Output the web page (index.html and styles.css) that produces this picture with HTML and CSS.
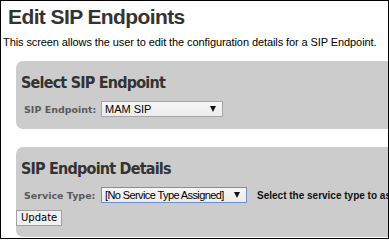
FILE: index.html
```html
<!DOCTYPE html>
<html lang="en">
<head>
<meta charset="UTF-8">
<title>Edit SIP Endpoints</title>
<link rel="stylesheet" href="styles.css">
</head>
<body>

<div id="frame">
  <h1 class="page-title">Edit SIP Endpoints</h1>
  <p class="intro">This screen allows the user to edit the configuration details for a SIP Endpoint.</p>

  <div class="panel panel-select">
    <h2>Select SIP Endpoint</h2>
    <div class="field-row">
      <label for="endpoint">SIP Endpoint:</label>
      <div class="fake-select endpoint-select" id="endpoint">
        <span>MAM SIP</span><span class="arrow"></span>
      </div>
    </div>
  </div>

  <div class="panel panel-details">
    <h2>SIP Endpoint Details</h2>
    <div class="field-row">
      <label for="serviceType">Service Type:</label>
      <div class="fake-select service-select focused" id="serviceType">
        <span class="tight">[No Service Type Assigned]</span><span class="arrow"></span>
      </div>
      <span class="hint">Select the service type to assign to this endpoint.</span>
    </div>
    <button type="button" class="btn-update">Update</button>
  </div>
</div>

</body>
</html>
```

FILE: styles.css
```css
body {
  margin: 0;
  padding: 0;
  background-color: #fff;
  font-family: "Liberation Sans", Arial, sans-serif;
  color: #000;
}
#frame {
  border: 1px solid #000;
  height: 237px;
  overflow: hidden;
  white-space: nowrap;
}
.page-title {
  margin: 4px 0 0 7px;
  font-size: 21px;
  line-height: 24px;
  font-weight: bold;
  color: #333;
  letter-spacing: -0.6px;
}
.intro {
  margin: 7px 0 0 2px;
  font-size: 11px;
  line-height: 13px;
  color: #000;
  letter-spacing: -0.09px;
}
.panel {
  background-color: #ccc;
  border-radius: 7px 0 0 7px;
  margin-left: 15px;
  padding: 12px 5px 0 5px;
}
.panel h2 {
  margin: 0;
  font-family: "DejaVu Sans Condensed", "DejaVu Sans", sans-serif;
  font-size: 16px;
  line-height: 20px;
  font-weight: bold;
  color: #333;
  letter-spacing: -0.8px;
}
.panel-select {
  margin-top: 12px;
  height: 56px;
}
.panel-details {
  margin-top: 18px;
  height: 78px;
}
.field-row {
  display: flex;
  align-items: center;
  margin-top: 8px;
  padding-left: 3px;
}
label {
  flex-shrink: 0;
  font-family: "DejaVu Sans", sans-serif;
  font-size: 9.5px;
  font-weight: bold;
  color: #5a5a5a;
  width: 77px;
}
.fake-select {
  flex-shrink: 0;
  display: flex;
  justify-content: space-between;
  align-items: center;
  box-sizing: border-box;
  height: 16px;
  padding: 0 6px 0 3px;
  background: linear-gradient(#f6f6f6, #ececec);
  border: 1px solid #a6a6a6;
  font-family: "Liberation Sans", Arial, sans-serif;
  font-size: 11px;
  color: #000;
}
.fake-select .tight {
  letter-spacing: -0.6px;
}
.fake-select .arrow {
  width: 0;
  height: 0;
  border-left: 3px solid transparent;
  border-right: 3px solid transparent;
  border-top: 6px solid #111;
}
.endpoint-select {
  width: 122px;
}
.service-select {
  width: 146px;
}
.focused {
  border-color: #6b90d6;
}
.hint {
  margin-left: 10px;
  font-family: "Liberation Sans", Arial, sans-serif;
  font-size: 10px;
  font-weight: bold;
  color: #111;
}
.btn-update {
  margin: 7px 0 0 -5px;
  height: 16px;
  padding: 0 4px;
  font-family: "DejaVu Sans", sans-serif;
  font-size: 10px;
  line-height: 14px;
  color: #000;
  background-color: #f0f0f0;
  border: 1px solid #a0a0a0;
  border-radius: 0;
}
```
